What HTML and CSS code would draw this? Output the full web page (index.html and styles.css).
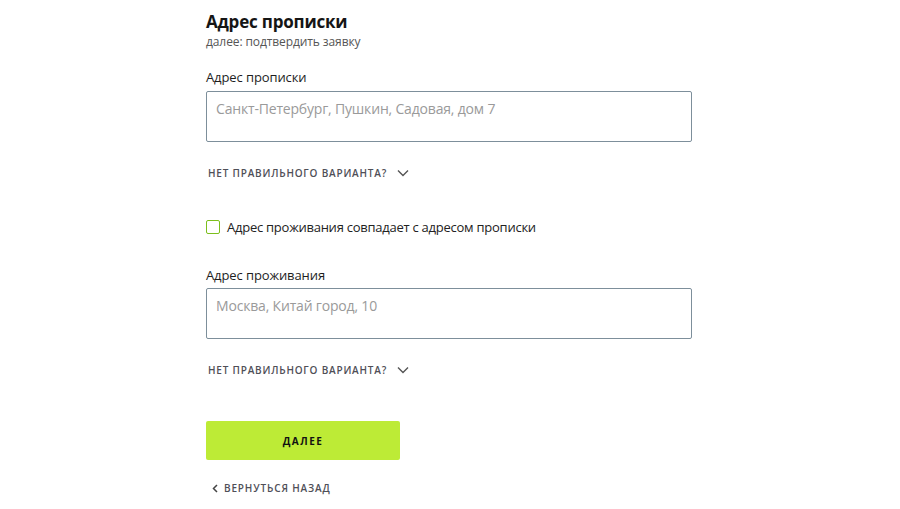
FILE: index.html
```html
<!DOCTYPE html>
<html lang="ru">
<head>
<meta charset="utf-8">
<title>Адрес прописки</title>
<link rel="stylesheet" href="styles.css">
</head>
<body>
<main class="page">
  <header class="head">
    <h1 class="title">Адрес прописки</h1>
    <p class="subtitle">далее: подтвердить заявку</p>
  </header>

  <section class="field">
    <label class="label">Адрес прописки</label>
    <div class="input"><span class="placeholder">Санкт-Петербург, Пушкин, Садовая, дом 7</span></div>
  </section>
  <div class="more">НЕТ ПРАВИЛЬНОГО ВАРИАНТА?
    <svg class="chev" width="12" height="8" viewBox="0 0 12 8"><path d="M1 1.5 L6 6.5 L11 1.5" fill="none" stroke="#555" stroke-width="1.4"/></svg>
  </div>

  <div class="check">
    <span class="box"></span>
    <span class="check-text">Адрес проживания совпадает с адресом прописки</span>
  </div>

  <section class="field field2">
    <label class="label">Адрес проживания</label>
    <div class="input"><span class="placeholder">Москва, Китай город, 10</span></div>
  </section>
  <div class="more">НЕТ ПРАВИЛЬНОГО ВАРИАНТА?
    <svg class="chev" width="12" height="8" viewBox="0 0 12 8"><path d="M1 1.5 L6 6.5 L11 1.5" fill="none" stroke="#555" stroke-width="1.4"/></svg>
  </div>

  <button class="btn">ДАЛЕЕ</button>
  <div class="back">
    <svg class="back-chev" width="6" height="9" viewBox="0 0 6 9"><path d="M5 1 L1.5 4.5 L5 8" fill="none" stroke="#444" stroke-width="1.5"/></svg>
    ВЕРНУТЬСЯ НАЗАД
  </div>
</main>
</body>
</html>
```

FILE: styles.css
```css
* { box-sizing: border-box; }
html, body { margin: 0; padding: 0; background: #fff; }
body {
  font-family: "Open Sans", "Noto Sans", sans-serif;
  color: #1e1e1e;
}
.page {
  width: 488px;
  margin: 0 auto;
  padding-top: 11px;
}
.title {
  margin: 0;
  font-size: 17px;
  font-weight: 700;
  line-height: 22px;
  letter-spacing: -0.2px;
  color: #151515;
}
.subtitle {
  margin: 1px 0 0;
  font-size: 12px;
  line-height: 16px;
  letter-spacing: -0.1px;
  color: #555;
}
.field { margin-top: 18px; }
.label {
  display: block;
  font-size: 13px;
  line-height: 18px;
  letter-spacing: -0.1px;
  color: #1e1e1e;
}
.input {
  margin-top: 5px;
  width: 486px;
  height: 51px;
  border: 1px solid #7d8f9b;
  border-radius: 2px;
  padding: 5px 10px 5px 9px;
}
.placeholder {
  font-size: 14px;
  line-height: 20px;
  letter-spacing: -0.18px;
  color: #9a9a9a;
}
.more {
  margin-top: 24px;
  margin-left: 2px;
  display: flex;
  align-items: center;
  font-size: 10px;
  font-weight: 600;
  letter-spacing: 0.8px;
  color: #4f4f57;
  line-height: 14px;
}
.chev { margin-left: 10px; }
.check {
  margin-top: 38px;
  display: flex;
  align-items: center;
}
.box {
  width: 14px;
  height: 14px;
  border: 1.5px solid #7cbf1c;
  border-radius: 2px;
  margin-right: 7px;
}
.check-text {
  font-size: 13px;
  line-height: 18px;
  letter-spacing: -0.25px;
  color: #222;
}
.field2 { margin-top: 30px; }
.field2 .input { margin-top: 4px; }
.btn {
  display: block;
  margin-top: 44px;
  width: 194px;
  height: 39px;
  border: none;
  border-radius: 2px;
  background: #bdeb36;
  font-family: inherit;
  font-size: 10px;
  font-weight: 700;
  letter-spacing: 1.5px;
  color: #111;
}
.back {
  margin-top: 21px;
  margin-left: 6px;
  display: flex;
  align-items: center;
  font-size: 10px;
  font-weight: 600;
  letter-spacing: 0.85px;
  color: #4f4f57;
  line-height: 14px;
}
.back-chev { margin-right: 6px; }
```
